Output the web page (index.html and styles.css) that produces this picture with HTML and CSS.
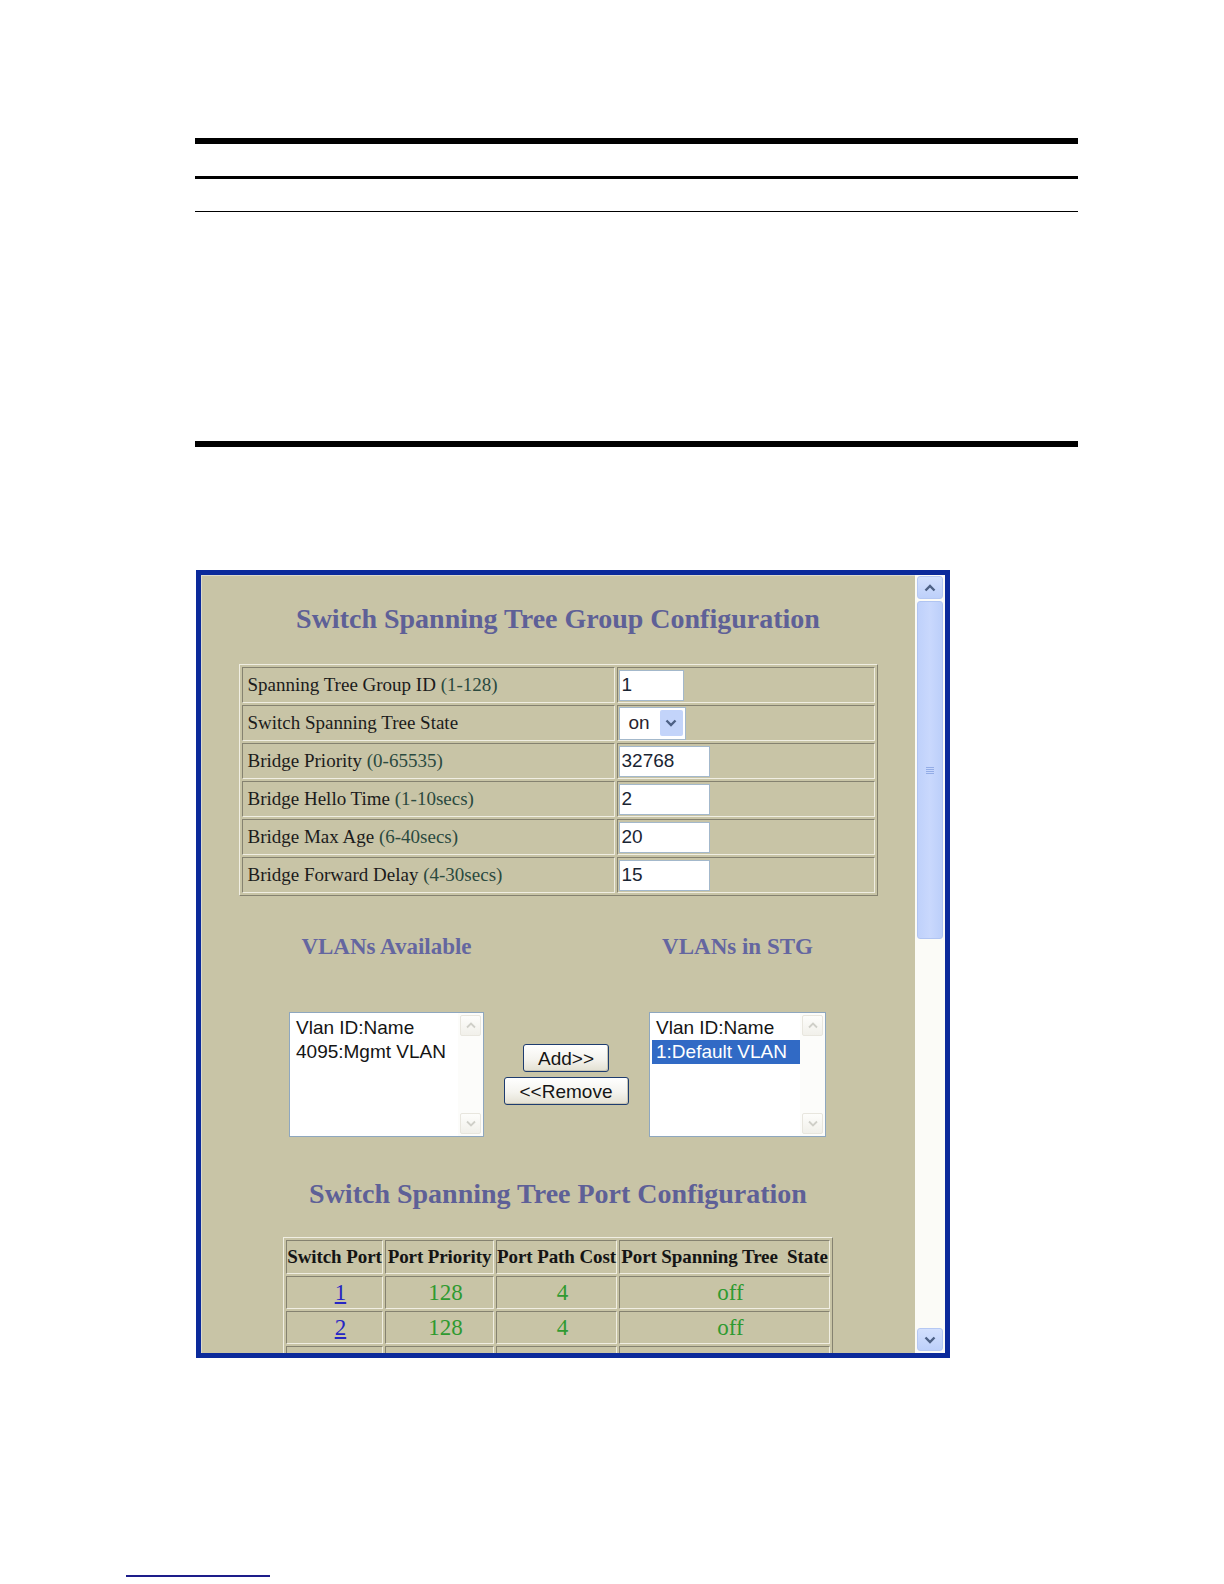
FILE: index.html
```html
<!DOCTYPE html>
<html>
<head>
<meta charset="utf-8">
<title>Switch Spanning Tree Group Configuration</title>
<link rel="stylesheet" href="styles.css">
</head>
<body>
<div class="page">
  <div class="rules">
    <div class="rule rule-top"></div>
    <div class="rule rule-mid"></div>
    <div class="rule rule-thin"></div>
    <div class="rule rule-bottom"></div>
  </div>

  <div class="window">
    <div class="viewport">
      <h1 class="title">Switch Spanning Tree Group Configuration</h1>

      <table class="cfg">
        <colgroup><col class="c-lbl"><col class="c-val"></colgroup>
        <tr>
          <td class="lbl">Spanning Tree Group ID <span class="range">(1-128)</span></td>
          <td class="val"><input class="txt narrow" type="text" value="1"></td>
        </tr>
        <tr>
          <td class="lbl">Switch Spanning Tree State</td>
          <td class="val">
            <div class="sel"><span class="sel-text">on</span><span class="sel-btn"><svg width="12" height="8" viewBox="0 0 12 8"><path d="M1.5 1.5 L6 6 L10.5 1.5" fill="none" stroke="#4d6185" stroke-width="2.4"/></svg></span></div>
          </td>
        </tr>
        <tr>
          <td class="lbl">Bridge Priority <span class="range">(0-65535)</span></td>
          <td class="val"><input class="txt wide" type="text" value="32768"></td>
        </tr>
        <tr>
          <td class="lbl">Bridge Hello Time <span class="range">(1-10secs)</span></td>
          <td class="val"><input class="txt wide" type="text" value="2"></td>
        </tr>
        <tr>
          <td class="lbl">Bridge Max Age <span class="range">(6-40secs)</span></td>
          <td class="val"><input class="txt wide" type="text" value="20"></td>
        </tr>
        <tr>
          <td class="lbl">Bridge Forward Delay <span class="range">(4-30secs)</span></td>
          <td class="val"><input class="txt wide" type="text" value="15"></td>
        </tr>
      </table>

      <div class="vlans">
        <div class="vh">VLANs Available</div>
        <div></div>
        <div class="vh">VLANs in STG</div>

        <div class="lb lb-left">
          <div class="lb-items">
            <div class="lb-item">Vlan ID:Name</div>
            <div class="lb-item">4095:Mgmt VLAN</div>
          </div>
          <div class="lb-scroll">
            <div class="lb-arrow"><svg width="10" height="7" viewBox="0 0 10 7"><path d="M1 5.5 L5 1.5 L9 5.5" fill="none" stroke="#cfcfc8" stroke-width="1.8"/></svg></div>
            <div class="lb-track"></div>
            <div class="lb-arrow"><svg width="10" height="7" viewBox="0 0 10 7"><path d="M1 1.5 L5 5.5 L9 1.5" fill="none" stroke="#cfcfc8" stroke-width="1.8"/></svg></div>
          </div>
        </div>

        <div class="btns">
          <button class="btn btn-add" type="button">Add&gt;&gt;</button>
          <button class="btn btn-remove" type="button">&lt;&lt;Remove</button>
        </div>

        <div class="lb lb-right">
          <div class="lb-items">
            <div class="lb-item">Vlan ID:Name</div>
            <div class="lb-item selected">1:Default VLAN</div>
          </div>
          <div class="lb-scroll">
            <div class="lb-arrow"><svg width="10" height="7" viewBox="0 0 10 7"><path d="M1 5.5 L5 1.5 L9 5.5" fill="none" stroke="#cfcfc8" stroke-width="1.8"/></svg></div>
            <div class="lb-track"></div>
            <div class="lb-arrow"><svg width="10" height="7" viewBox="0 0 10 7"><path d="M1 1.5 L5 5.5 L9 1.5" fill="none" stroke="#cfcfc8" stroke-width="1.8"/></svg></div>
          </div>
        </div>
      </div>

      <h1 class="title title2">Switch Spanning Tree Port Configuration</h1>

      <table class="ports">
        <colgroup><col class="p1"><col class="p2"><col class="p3"><col class="p4"></colgroup>
        <tr class="head">
          <th>Switch Port</th><th>Port Priority</th><th>Port Path Cost</th><th>Port Spanning Tree&nbsp; State</th>
        </tr>
        <tr><td><a href="#">1</a></td><td>128</td><td>4</td><td>off</td></tr>
        <tr><td><a href="#">2</a></td><td>128</td><td>4</td><td>off</td></tr>
        <tr class="clipped"><td></td><td></td><td></td><td></td></tr>
      </table>
    </div>

    <div class="vscroll">
      <div class="sb-btn"><svg width="12" height="8" viewBox="0 0 12 8"><path d="M1.5 6.5 L6 2 L10.5 6.5" fill="none" stroke="#4d6185" stroke-width="2.4"/></svg></div>
      <div class="sb-thumb"><span class="grip"></span><span class="grip"></span><span class="grip"></span><span class="grip"></span></div>
      <div class="sb-track"></div>
      <div class="sb-btn"><svg width="12" height="8" viewBox="0 0 12 8"><path d="M1.5 1.5 L6 6 L10.5 1.5" fill="none" stroke="#4d6185" stroke-width="2.4"/></svg></div>
    </div>
  </div>

  <div class="footline"></div>
</div>
</body>
</html>
```

FILE: styles.css
```css
html, body {
  margin: 0;
  padding: 0;
  background: #ffffff;
}

.page {
  width: 1224px;
  height: 1584px;
  overflow: hidden;
  display: flex;
  flex-direction: column;
  align-items: flex-start;
}

/* document rules */
.rules {
  margin: 138px 0 0 195px;
  width: 883px;
}
.rule { background: #000; }
.rule-top { height: 6px; }
.rule-mid { height: 3px; margin-top: 32px; }
.rule-thin { height: 1px; margin-top: 32px; }
.rule-bottom { height: 6px; margin-top: 229px; }

/* browser window */
.window {
  margin: 123px 0 0 196px;
  width: 754px;
  height: 788px;
  box-sizing: border-box;
  border: 5px solid #0b2a9b;
  background: #c8c4a6;
  display: flex;
}

.viewport {
  flex: 1;
  overflow: hidden;
  padding-top: 28px;
  box-shadow: inset 1px 1px 0 #dcdacb;
}

.title {
  margin: 0;
  text-align: center;
  font: bold 28px/32px "Liberation Serif", "Times New Roman", serif;
  color: #5e6097;
}
.title2 { margin-top: 41px; }

/* config table */
.cfg {
  margin: 29px auto 0;
  width: 639px;
  table-layout: fixed;
  border-collapse: separate;
  border-spacing: 2px;
  border: 1px solid;
  border-color: #f0eee2 #858270 #858270 #f0eee2;
}
.c-lbl { width: 373px; }
.c-val { width: 258px; }
.cfg td {
  box-sizing: border-box;
  height: 36px;
  border: 1px solid;
  border-color: #858270 #f0eee2 #f0eee2 #858270;
  padding: 0;
  vertical-align: middle;
}
.cfg td.lbl {
  padding-left: 5px;
  font: 19px "Liberation Serif", "Times New Roman", serif;
  color: #1b1b1b;
  white-space: nowrap;
}
.range { color: #2b4a3f; }
.cfg td.val { padding-left: 1px; }

.txt {
  display: block;
  box-sizing: border-box;
  height: 31px;
  border: 1px solid #a3b8cb;
  background: #fff;
  font: 19px "Liberation Sans", Arial, sans-serif;
  color: #1a2533;
  padding: 0 2px;
  margin: 0;
  outline: none;
}
.txt.narrow { width: 65px; }
.txt.wide { width: 91px; }

.sel {
  box-sizing: border-box;
  width: 67px;
  height: 33px;
  border: 1px solid #a3b8cb;
  background: #fff;
  display: flex;
  align-items: center;
  justify-content: space-between;
  padding: 0 2px 0 9px;
}
.sel-text {
  font: 19px "Liberation Sans", Arial, sans-serif;
  color: #2a1f2f;
}
.sel-btn {
  width: 23px;
  height: 26px;
  border-radius: 2px;
  background: #c3d4fa;
  display: flex;
  align-items: center;
  justify-content: center;
}

/* VLAN section */
.vlans {
  margin-top: 38px;
  display: grid;
  grid-template-columns: 234px 125px 218px;
  justify-content: center;
  row-gap: 52px;
  align-items: center;
}
.vh {
  text-align: center;
  font: bold 23px/26px "Liberation Serif", "Times New Roman", serif;
  color: #6466a0;
}

.lb {
  justify-self: center;
  box-sizing: border-box;
  height: 125px;
  border: 1px solid #8ea7bf;
  background: #fff;
  display: flex;
}
.lb-left { width: 195px; }
.lb-right { width: 177px; }
.lb-items {
  flex: 1;
  padding: 3px 0 0 2px;
  font: 19px/24px "Liberation Sans", Arial, sans-serif;
  color: #141414;
  white-space: nowrap;
}
.lb-item { padding-left: 4px; }
.lb-item.selected {
  background: #316ac5;
  color: #fff;
}
.lb-scroll {
  width: 25px;
  display: flex;
  flex-direction: column;
  align-items: center;
  padding: 2px 0;
  background: #fcfcfa;
}
.lb-arrow {
  box-sizing: border-box;
  width: 21px;
  height: 21px;
  border: 1px solid #e8e6de;
  border-radius: 2px;
  background: linear-gradient(#fdfdfb, #f1f0ea);
  display: flex;
  align-items: center;
  justify-content: center;
}
.lb-track { flex: 1; }

.btns {
  display: flex;
  flex-direction: column;
  align-items: center;
  gap: 5px;
}
.btn {
  box-sizing: border-box;
  height: 28px;
  padding: 0;
  border: 1px solid #1e3c6f;
  border-radius: 3px;
  background: linear-gradient(#ffffff, #f4f3ee 55%, #e3e0d2);
  font: 19px/1 "Liberation Sans", Arial, sans-serif;
  color: #151515;
  box-shadow: inset -1px -1px 0 #c9c5b3;
}
.btn-add { width: 86px; }
.btn-remove { width: 125px; }

/* port table */
.ports {
  margin: 27px auto 0;
  width: 550px;
  table-layout: fixed;
  border-collapse: separate;
  border-spacing: 2px;
  border: 1px solid;
  border-color: #f0eee2 #858270 #858270 #f0eee2;
}
.p1 { width: 97px; }
.p2 { width: 109px; }
.p3 { width: 121px; }
.p4 { width: 211px; }
.ports th, .ports td {
  box-sizing: border-box;
  border: 1px solid;
  border-color: #858270 #f0eee2 #f0eee2 #858270;
  padding: 0;
  text-align: center;
  vertical-align: middle;
  white-space: nowrap;
}
.ports th {
  height: 34px;
  font: bold 19px "Liberation Serif", "Times New Roman", serif;
  color: #141414;
  letter-spacing: -0.1px;
}
.ports td {
  height: 33px;
  padding-left: 12px;
  font: 23px "Liberation Serif", "Times New Roman", serif;
  color: #2f9a30;
}
.ports a {
  color: #2626c4;
  text-decoration: underline;
}

/* window scrollbar */
.vscroll {
  width: 30px;
  background: #fbfbf7;
  display: flex;
  flex-direction: column;
  align-items: center;
  padding: 1px 0 2px;
  box-sizing: border-box;
}
.sb-btn {
  box-sizing: border-box;
  width: 26px;
  height: 23px;
  border: 1px solid #b5c8f3;
  border-radius: 3px;
  background: linear-gradient(#d3e0fd, #bdd0fa);
  display: flex;
  align-items: center;
  justify-content: center;
}
.sb-thumb {
  box-sizing: border-box;
  margin-top: 2px;
  width: 26px;
  height: 338px;
  border: 1px solid #b0c4f2;
  border-radius: 3px;
  background: linear-gradient(90deg, #bfd1fb, #c9d8fd 50%, #bccffa);
  display: flex;
  flex-direction: column;
  align-items: center;
  justify-content: center;
  gap: 1px;
}
.grip {
  width: 8px;
  height: 1px;
  background: #93ace6;
}
.sb-track { flex: 1; }

.footline {
  margin: 217px 0 0 126px;
  width: 144px;
  height: 2px;
  background: #1d1d8a;
}
```
